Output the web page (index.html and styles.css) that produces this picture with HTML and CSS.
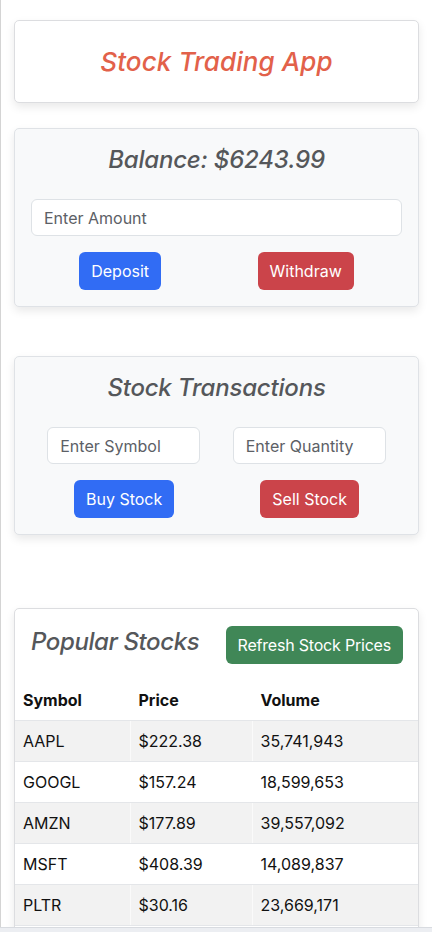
FILE: index.html
```html
<!DOCTYPE html>
<html lang="en">
<head>
<meta charset="utf-8">
<title>Stock Trading App</title>
<link rel="stylesheet" href="styles.css">
</head>
<body>
<div class="page">
  <div class="card header-card">
    <h1 class="app-title">Stock Trading App</h1>
  </div>

  <div class="card panel balance-card">
    <h2 class="panel-title">Balance: $6243.99</h2>
    <input class="field field-wide" type="text" placeholder="Enter Amount">
    <div class="btn-row">
      <button class="btn btn-blue">Deposit</button>
      <button class="btn btn-red">Withdraw</button>
    </div>
  </div>

  <div class="card panel trade-card">
    <h2 class="panel-title">Stock Transactions</h2>
    <div class="field-row">
      <input class="field field-half" type="text" placeholder="Enter Symbol">
      <input class="field field-half" type="text" placeholder="Enter Quantity">
    </div>
    <div class="btn-row">
      <button class="btn btn-blue">Buy Stock</button>
      <button class="btn btn-red">Sell Stock</button>
    </div>
  </div>

  <div class="card stocks-card">
    <div class="stocks-head">
      <h2 class="stocks-title">Popular Stocks</h2>
      <button class="btn btn-green">Refresh Stock Prices</button>
    </div>
    <table class="stock-table">
      <thead>
        <tr><th class="c1">Symbol</th><th class="c2">Price</th><th class="c3">Volume</th></tr>
      </thead>
      <tbody>
        <tr><td>AAPL</td><td>$222.38</td><td>35,741,943</td></tr>
        <tr><td>GOOGL</td><td>$157.24</td><td>18,599,653</td></tr>
        <tr><td>AMZN</td><td>$177.89</td><td>39,557,092</td></tr>
        <tr><td>MSFT</td><td>$408.39</td><td>14,089,837</td></tr>
        <tr><td>PLTR</td><td>$30.16</td><td>23,669,171</td></tr>
        <tr class="filler"><td></td><td></td><td></td></tr>
      </tbody>
    </table>
  </div>
</div>
<div class="bottom-strip"></div>
</body>
</html>
```

FILE: styles.css
```css
* { box-sizing: border-box; }

html, body {
  margin: 0;
  padding: 0;
  background: #ffffff;
}

body {
  font-family: Inter, "Noto Sans", "Liberation Sans", sans-serif;
  color: #212529;
  font-size: 16px;
  border-left: 1px solid #d4d4d4;
  min-height: 932px;
}

.page {
  padding: 20px 13px 0 13px;
}

.card {
  border: 1px solid #dcdde0;
  border-radius: 5px;
  box-shadow: 0 4px 10px rgba(0, 0, 0, 0.09);
  background: #ffffff;
}

.header-card {
  height: 83px;
  display: flex;
  align-items: center;
  justify-content: center;
}

.app-title {
  margin: 0;
  font-size: 26px;
  font-weight: 500;
  font-style: italic;
  color: #e2614a;
  letter-spacing: 0.1px;
}

.panel {
  background: #f8f9fa;
  border-color: #dfe2e6;
  padding: 16px 16px 16px 16px;
  display: flex;
  flex-direction: column;
}

.balance-card {
  margin-top: 25px;
  height: 179px;
}

.trade-card {
  margin-top: 49px;
  height: 179px;
}

.panel-title {
  margin: 0;
  text-align: center;
  font-size: 24px;
  font-weight: 500;
  font-style: italic;
  color: #55575a;
  line-height: 30px;
  letter-spacing: -0.2px;
}

.field {
  height: 37px;
  border: 1px solid #dee2e6;
  border-radius: 6px;
  background: #ffffff;
  font-family: inherit;
  font-size: 16px;
  padding: 0 12px;
  color: #212529;
}

.field::placeholder {
  color: #5c6066;
}

.field-wide {
  width: 100%;
  margin-top: 24px;
}

.field-row {
  display: flex;
  justify-content: space-around;
  margin-top: 24px;
}

.field-half {
  width: 153px;
}

.btn-row {
  display: flex;
  justify-content: space-around;
  margin-top: 16px;
}

.btn {
  font-family: inherit;
  font-size: 16px;
  color: #ffffff;
  border: none;
  border-radius: 6px;
  height: 38px;
  padding: 0 12px;
  cursor: pointer;
}

.btn-blue { background: #316cf4; }
.btn-red { background: #cb444a; }
.btn-green {
  background: #408757;
  padding: 0 12px;
  letter-spacing: -0.2px;
}

.stocks-card {
  margin-top: 73px;
  overflow: hidden;
}

.stocks-head {
  display: flex;
  justify-content: space-between;
  align-items: center;
  padding: 17px 15px 16px 16px;
}

.stocks-title {
  margin: 0 0 7px 0;
  font-size: 24px;
  font-weight: 500;
  font-style: italic;
  color: #55575a;
  letter-spacing: -0.4px;
}

.stock-table {
  width: 100%;
  border-collapse: collapse;
  font-size: 16px;
}

.stock-table th,
.stock-table td {
  text-align: left;
  padding: 0 8px;
  height: 41px;
  border-bottom: 1px solid #e4e6e9;
  color: #111111;
}

.stock-table th {
  font-weight: 700;
  height: 40px;
}

.stock-table td + td,
.stock-table th + th {
  border-left: 1px solid rgba(255, 255, 255, 0.6);
}

.stock-table .c1 { width: 115px; }
.stock-table .c2 { width: 122px; }

.stock-table tbody tr:nth-child(odd) td {
  background: #f2f2f2;
}

.stock-table tr.filler td {
  background: #ffffff;
  border-bottom: none;
}

.bottom-strip {
  position: fixed;
  left: 0;
  right: 0;
  bottom: 0;
  height: 5px;
  background: #eceef2;
  border-top: 1px solid #d8dbe0;
}
```
